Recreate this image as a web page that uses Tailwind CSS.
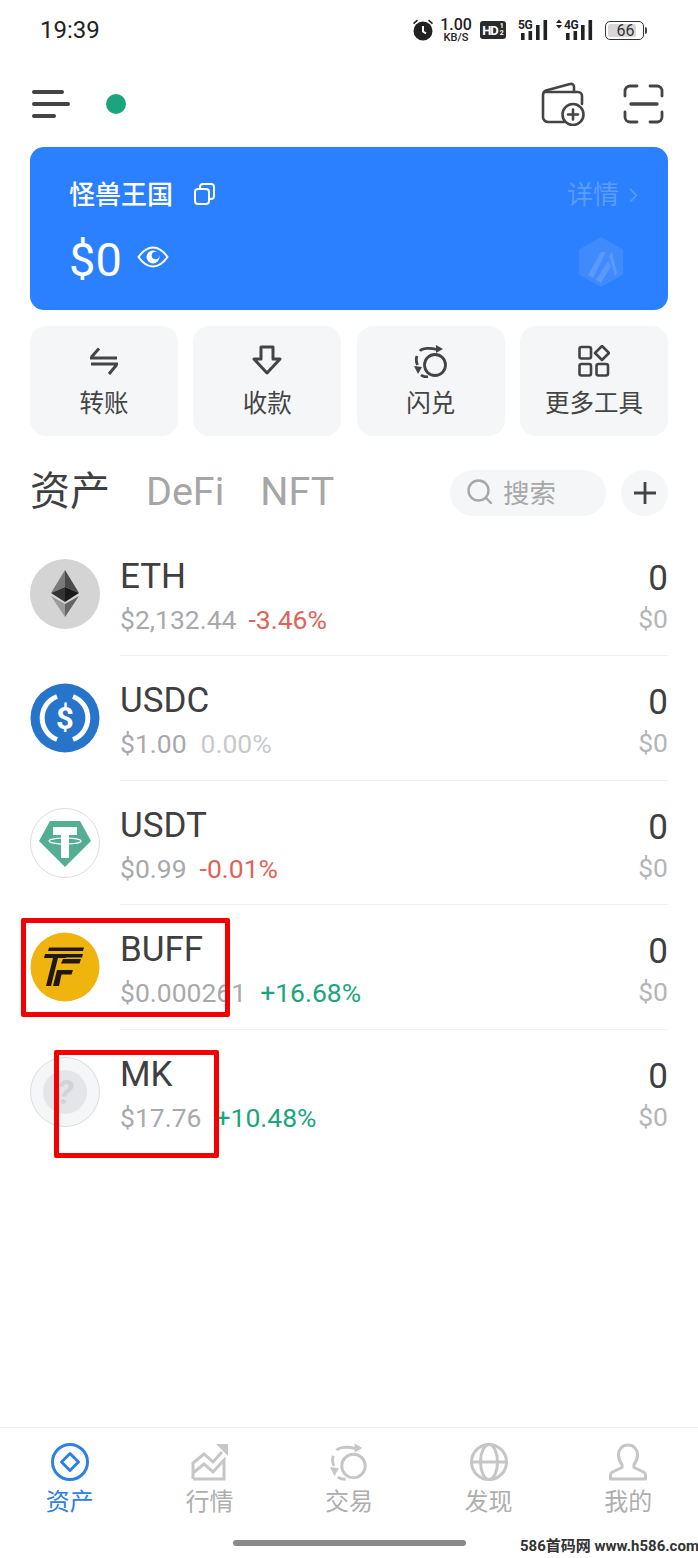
<!DOCTYPE html>
<html lang="zh-CN">
<head>
<meta charset="UTF-8" />
<meta name="viewport" content="width=device-width, initial-scale=1.0" />
<title>资产</title>
<script src="https://cdn.jsdelivr.net/npm/@tailwindcss/browser@4"></script>
</head>
<body class="bg-white">
<div class="relative w-[698px] h-[1558px] overflow-hidden flex flex-col bg-white text-[#3f3f41] font-['Roboto','Noto_Sans_CJK_SC',sans-serif]">

	<!-- status bar -->
	<div class="h-[60px] shrink-0 flex items-center pl-[40px] text-[#222]">
		<span class="text-[24px] leading-none w-[372px]">19:39</span>
		<svg class="w-[22px] h-[23px] mb-[1px]" viewBox="0 0 22 23" fill="#222"><circle cx="11" cy="13" r="9.500"/><path d="M1 5l4-3.500 1 1.200-4 3.500zM21 5l-4-3.500-1 1.200 4 3.500z"/><path d="M11 8v5.500l3 2" fill="none" stroke="#fff" stroke-width="2"/></svg>
		<div class="ml-[7px] w-[30px] flex flex-col items-center gap-[2px] text-[#222] font-medium">
			<span class="text-[16px] leading-[13px]">1.00</span>
			<span class="text-[11px] leading-[9px]">KB/S</span>
		</div>
		<div class="ml-[9px] w-[26px] h-[18px] rounded-[3px] bg-[#2a2a2a] text-white flex items-center justify-center text-[13px] font-bold leading-none tracking-[-1px]">HD<span class="ml-[2px] text-[7px] leading-[7px] w-[4px] tracking-normal">1 2</span></div>
		<svg class="ml-[12px] w-[30px] h-[22px]" viewBox="0 0 30 22" fill="#222"><text x="0" y="9.500" font-size="12" font-weight="700" letter-spacing="-.5" font-family="Roboto">5G</text><rect x="3" y="14" width="3.600" height="7"/><rect x="10.500" y="12" width="3.600" height="9"/><rect x="18" y="6" width="3.600" height="15"/><rect x="25.500" y="1" width="3.600" height="20"/></svg>
		<svg class="ml-[7px] w-[38px] h-[22px]" viewBox="0 0 38 22" fill="#222"><path d="M1 4l3-3.500L7 4zM1 6l3 3.500L7 6z"/><text x="9" y="9.500" font-size="12" font-weight="700" letter-spacing="-.5" font-family="Roboto">4G</text><rect x="11" y="14" width="3.600" height="7"/><rect x="18.500" y="12" width="3.600" height="9"/><rect x="26" y="6" width="3.600" height="15"/><rect x="33.500" y="1" width="3.600" height="20"/></svg>
		<div class="ml-[12px] flex items-center">
			<div class="w-[39px] h-[19px] rounded-[5px] border border-[#333] p-[2px] flex">
				<div class="w-[28px] rounded-[2px] bg-[#d8d8d8] text-[#333] text-[16px] leading-[13px] text-center pl-[7px]">66</div>
			</div>
			<div class="w-[2px] h-[7px] ml-[1px] bg-[#444] rounded-r"></div>
		</div>
	</div>

	<!-- header -->
	<div class="h-[87px] shrink-0 flex items-center pl-[32px] pr-[34px]">
		<div class="w-[38px] flex flex-col gap-[8px]">
			<div class="w-[32px] h-[4px] rounded-full bg-[#444]"></div>
			<div class="w-[38px] h-[4px] rounded-full bg-[#444]"></div>
			<div class="w-[24px] h-[4px] rounded-full bg-[#444]"></div>
		</div>
		<div class="ml-[36px] w-[20px] h-[20px] rounded-full bg-[#1ba57c]"></div>
		<svg class="ml-auto w-[44px] h-[44px]" viewBox="0 0 44 44" fill="none" stroke="#444" stroke-width="2.600" stroke-linecap="round" stroke-linejoin="round">
			<path d="M23 40H7a5 5 0 0 1-5-5V13C2 10.500 3 9.500 5 8.500L29 2c2.500-.6 4 .8 4 3v5"/>
			<path d="M4 10h33a4 4 0 0 1 4 4v8"/>
			<circle cx="32" cy="32.500" r="10.500"/>
			<path d="M32 27.500v10M27 32.500h10"/>
		</svg>
		<svg class="ml-[38px] w-[41px] h-[40px]" viewBox="0 0 41 40" fill="none" stroke="#444" stroke-width="2.800" stroke-linecap="round">
			<path d="M2 12V7a5 5 0 0 1 5-5h7M27 2h7a5 5 0 0 1 5 5v5M2 28v5a5 5 0 0 0 5 5h7M27 38h7a5 5 0 0 0 5-5v-5"/>
			<path d="M8 20h26" stroke-width="3.400"/>
		</svg>
	</div>

	<!-- wallet card -->
	<div class="mx-[30px] h-[163px] shrink-0 rounded-[14px] bg-[#2b80ff] flex justify-between pl-[39px] pr-[30px] pt-[30px] text-white">
		<div>
			<div class="flex items-center h-[36px]">
				<span class="text-[26px] font-medium leading-none">怪兽王国</span>
				<svg class="ml-[21px] mb-[3px] w-[22px] h-[22px]" viewBox="0 0 22 22" fill="none" stroke="#fff" stroke-width="2"><rect x="1" y="6" width="14" height="15" rx="3"/><path d="M6 6V4a3 3 0 0 1 3-3h8a3 3 0 0 1 3 3v9a3 3 0 0 1-3 3h-2"/></svg>
			</div>
			<div class="flex items-center mt-[18px]">
				<span class="text-[47px] leading-[58px]">$0</span>
				<svg class="ml-[15px] mb-[6px] w-[32px] h-[22px]" viewBox="0 0 32 22" fill="none"><path d="M1.500 11C6 4.500 10.500 1.500 16 1.500S26 4.500 30.500 11C26 17.500 21.500 20.500 16 20.500S6 17.500 1.500 11z" stroke="#fff" stroke-width="2"/><circle cx="16" cy="11" r="6.500" fill="#fff"/><circle cx="18.500" cy="9.500" r="3.800" fill="#2b80ff"/></svg>
			</div>
		</div>
		<div class="flex flex-col items-end">
			<div class="flex items-center h-[36px] text-[#5a9cff]">
				<span class="text-[26px] leading-none">详情</span>
				<svg class="ml-[10px] w-[9px] h-[15px]" viewBox="0 0 9 15" fill="none" stroke="#5a9cff" stroke-width="1.600"><path d="M1 1l6.500 6.500L1 14"/></svg>
			</div>
			<svg class="mt-[24px] mr-[15px] w-[44px] h-[50px]" viewBox="0 0 44 50"><path d="M22 0l22 12.500v25L22 50 0 37.500v-25z" fill="#3f8bfd"/><path d="M9 38L22 15h5L14 41zM17 43l12-19 3 5-10 17zM36 39L30 19l3-4 5 21z" fill="#5a99fb"/></svg>
		</div>
	</div>

	<!-- tools -->
	<div class="mx-[30px] mt-[16px] h-[110px] shrink-0 grid grid-cols-4 gap-[15.300px] text-[24.500px] leading-none text-[#444]">
		<div class="rounded-[16px] bg-[#f5f6f8] flex flex-col items-center pt-[20px]">
			<svg class="w-[30px] h-[30px]" viewBox="0 0 30 30" fill="none" stroke="#444" stroke-width="3"><path d="M1 12h27M10 2.500L2.500 11M2 18h27M20 28l7.500-9"/></svg>
			<span class="mt-[16px]">转账</span>
		</div>
		<div class="rounded-[16px] bg-[#f5f6f8] flex flex-col items-center pt-[19px]">
			<svg class="w-[30px] h-[31px]" viewBox="0 0 30 31" fill="none" stroke="#444" stroke-width="3" stroke-linejoin="round"><path d="M9 2h12v12h7L15 28 2 14h7z"/></svg>
			<span class="mt-[16px]">收款</span>
		</div>
		<div class="rounded-[16px] bg-[#f5f6f8] flex flex-col items-center pt-[19px]">
			<svg class="w-[34px] h-[33px]" viewBox="0 0 34 33" fill="none" stroke="#444" stroke-width="2.800"><circle cx="21" cy="20" r="10.500"/><path d="M23 4.500C16 2.500 8 3 6 6M3 11c-1.200 3-.8 6 .5 9M14 32c-2.500 0-5-.5-7-2"/><path d="M22 0v8l7-4zM0 21l8 1-4 7z" fill="#444" stroke="none"/></svg>
			<span class="mt-[14px]">闪兑</span>
		</div>
		<div class="rounded-[16px] bg-[#f5f6f8] flex flex-col items-center pt-[19px]">
			<svg class="w-[32px] h-[32px]" viewBox="0 0 32 32" fill="none" stroke="#444" stroke-width="2.600" stroke-linejoin="round"><rect x="1.500" y="2" width="11.500" height="11.500" rx="2"/><path d="M24 1l7 7-7 7-7-7z"/><rect x="1.500" y="19" width="11.500" height="11.500" rx="2"/><rect x="18.500" y="19" width="11.500" height="11.500" rx="2"/></svg>
			<span class="mt-[15px]">更多工具</span>
		</div>
	</div>

	<!-- tabs -->
	<div class="mt-[34px] mx-[30px] h-[46px] shrink-0 flex items-center">
		<span class="text-[40px] leading-none mb-[3px] text-[#3f3f41]">资产</span>
		<span class="ml-[36px] text-[39.500px] leading-none mb-[3px] text-[#a6a6a6]">DeFi</span>
		<span class="ml-[36px] text-[39.500px] leading-none mb-[3px] text-[#a6a6a6]">NFT</span>
		<div class="ml-auto w-[156px] h-[46px] rounded-full bg-[#f5f6f8] flex items-center pl-[17px] text-[26.500px] text-[#a8a8a8]">
			<svg class="w-[26px] h-[26px] mb-[2px]" viewBox="0 0 26 26" fill="none" stroke="#a8a8a8" stroke-width="2.400" stroke-linecap="round"><circle cx="11.500" cy="11.500" r="10"/><path d="M19 19l5 5"/></svg>
			<span class="ml-[10px] mt-[3px] leading-none">搜索</span>
		</div>
		<div class="ml-[15px] w-[47px] h-[46px] rounded-full bg-[#f5f6f8] flex items-center justify-center">
			<svg class="w-[22px] h-[22px]" viewBox="0 0 22 22" stroke="#444" stroke-width="2.800"><path d="M11 0v22M0 11h22"/></svg>
		</div>
	</div>

	<!-- token list -->
	<div class="mt-[16px] flex-1 px-[30px]">
		<div class="h-[124.400px] flex">
			<svg class="mt-[27px] w-[70px] h-[70px] shrink-0" viewBox="0 0 70 70">
				<circle cx="35" cy="35" r="35" fill="#d4d4d4"/>
				<path d="M35 11L21 34l14-6z" fill="#7a7a7a"/><path d="M35 11l14 23-14-6z" fill="#4a4a4a"/>
				<path d="M21 34l14-6v15z" fill="#333"/><path d="M49 34l-14-6v15z" fill="#1a1a1a"/>
				<path d="M21 37l14 8v13z" fill="#9a9a9a"/><path d="M49 37l-14 8v13z" fill="#666"/>
			</svg>
			<div class="ml-[20px] flex-1 flex justify-between pt-[25px] border-b border-[#f1f1f1]">
				<div>
					<div class="text-[35px] leading-[40px]">ETH</div>
					<div class="mt-[8px] text-[26.500px] leading-[30px] text-[#a8a9ad]">$2,132.44<span class="ml-[12px] text-[#e0635a]">-3.46%</span></div>
				</div>
				<div class="text-right">
					<div class="text-[35px] leading-[44px]">0</div>
					<div class="mt-[3px] text-[26.500px] leading-[30px] text-[#b5b5b8]">$0</div>
				</div>
			</div>
		</div>
		<div class="h-[124.400px] flex">
			<svg class="mt-[27px] w-[70px] h-[70px] shrink-0" viewBox="0 0 70 70">
				<circle cx="35" cy="35" r="34.500" fill="#2775ca"/>
				<path d="M27 13.500a23 23 0 0 0 0 43M43 13.500a23 23 0 0 1 0 43" fill="none" stroke="#fff" stroke-width="5"/>
				<text x="35" y="46" text-anchor="middle" font-size="31" font-weight="700" fill="#fff" font-family="Roboto">$</text>
			</svg>
			<div class="ml-[20px] flex-1 flex justify-between pt-[25px] border-b border-[#f1f1f1]">
				<div>
					<div class="text-[35px] leading-[40px]">USDC</div>
					<div class="mt-[8px] text-[26.500px] leading-[30px] text-[#a8a9ad]">$1.00<span class="ml-[14px] text-[#c8c9cc]">0.00%</span></div>
				</div>
				<div class="text-right">
					<div class="text-[35px] leading-[44px]">0</div>
					<div class="mt-[3px] text-[26.500px] leading-[30px] text-[#b5b5b8]">$0</div>
				</div>
			</div>
		</div>
		<div class="h-[124.400px] flex">
			<svg class="mt-[27px] w-[70px] h-[70px] shrink-0" viewBox="0 0 70 70">
				<circle cx="35" cy="35" r="34.500" fill="#fff" stroke="#ddd"/>
				<path d="M20 13h30l11 20-26 26L9 33z" fill="#53ae94"/>
				<path d="M23 19h24v8H39v23h-8V27h-8z" fill="#fff"/>
				<ellipse cx="35" cy="33" rx="16" ry="3" fill="none" stroke="#fff" stroke-width="1.200"/>
			</svg>
			<div class="ml-[20px] flex-1 flex justify-between pt-[25px] border-b border-[#f1f1f1]">
				<div>
					<div class="text-[35px] leading-[40px]">USDT</div>
					<div class="mt-[8px] text-[26.500px] leading-[30px] text-[#a8a9ad]">$0.99<span class="ml-[13px] text-[#e0635a]">-0.01%</span></div>
				</div>
				<div class="text-right">
					<div class="text-[35px] leading-[44px]">0</div>
					<div class="mt-[3px] text-[26.500px] leading-[30px] text-[#b5b5b8]">$0</div>
				</div>
			</div>
		</div>
		<div class="h-[124.400px] flex">
			<svg class="mt-[27px] w-[70px] h-[70px] shrink-0" viewBox="0 0 70 70">
				<circle cx="35" cy="35" r="34.500" fill="#f0b40f"/>
				<path d="M19 15.500h35l-1 3.500H18zM15 22h22l-1 4h-8l-7 28h-5l7-28H14zM33 27h18l-1.500 4.500H31zM27 38h16l-1.500 4.500H31.500L29 54h-6zM36 22h17l-1 3.500H35z" fill="#1e1a12"/>
			</svg>
			<div class="ml-[20px] flex-1 flex justify-between pt-[25px] border-b border-[#f1f1f1]">
				<div>
					<div class="text-[35px] leading-[40px]">BUFF</div>
					<div class="mt-[8px] text-[26.500px] leading-[30px] text-[#a8a9ad]">$0.000261<span class="ml-[14px] text-[#1ba57c]">+16.68%</span></div>
				</div>
				<div class="text-right">
					<div class="text-[35px] leading-[44px]">0</div>
					<div class="mt-[3px] text-[26.500px] leading-[30px] text-[#b5b5b8]">$0</div>
				</div>
			</div>
		</div>
		<div class="h-[124.400px] flex">
			<svg class="mt-[27px] w-[70px] h-[70px] shrink-0" viewBox="0 0 70 70">
				<circle cx="35" cy="35" r="34.500" fill="#f5f6f8" stroke="#dcdcdc"/>
				<circle cx="35" cy="35" r="22" fill="#e4e5e9"/>
				<text x="35" y="47" text-anchor="middle" font-size="34" font-weight="700" fill="#d2d3d7" font-family="Roboto" font-style="italic">?</text>
			</svg>
			<div class="ml-[20px] flex-1 flex justify-between pt-[25px]">
				<div>
					<div class="text-[35px] leading-[40px]">MK</div>
					<div class="mt-[8px] text-[26.500px] leading-[30px] text-[#a8a9ad]">$17.76<span class="ml-[14px] text-[#1ba57c]">+10.48%</span></div>
				</div>
				<div class="text-right">
					<div class="text-[35px] leading-[44px]">0</div>
					<div class="mt-[3px] text-[26.500px] leading-[30px] text-[#b5b5b8]">$0</div>
				</div>
			</div>
		</div>
	</div>

	<!-- bottom nav -->
	<div class="h-[131px] shrink-0 border-t border-[#efefef] pt-[15px]">
		<div class="grid grid-cols-5 text-[24px] leading-none text-[#aeaeae]">
			<div class="flex flex-col items-center text-[#2f80e4]">
				<svg class="w-[38px] h-[38px]" viewBox="0 0 38 38" fill="none" stroke="#2f80e4" stroke-width="3"><circle cx="19" cy="19" r="17.500"/><path d="M19 10.500l8.500 8.500-8.500 8.500-8.500-8.500z" stroke-linejoin="round"/></svg>
				<span class="mt-[9px]">资产</span>
			</div>
			<div class="flex flex-col items-center">
				<svg class="w-[38px] h-[38px]" viewBox="0 0 38 38" fill="none" stroke="#c6c6c6" stroke-width="3"><path d="M3 36V20l11-9 9 8 9-10M3 36h31V17l-11 12-9-8-11 9"/><path d="M26 1h12v12z" fill="#c6c6c6" stroke="none"/></svg>
				<span class="mt-[9px]">行情</span>
			</div>
			<div class="flex flex-col items-center">
				<svg class="w-[38px] h-[38px]" viewBox="0 0 34 33" fill="none" stroke="#c6c6c6" stroke-width="2.600"><circle cx="21" cy="20" r="10.500"/><path d="M23 4.500C16 2.500 8 3 6 6M3 11c-1.200 3-.8 6 .5 9M14 32c-2.500 0-5-.5-7-2"/><path d="M22 0v8l7-4zM0 21l8 1-4 7z" fill="#c6c6c6" stroke="none"/></svg>
				<span class="mt-[9px]">交易</span>
			</div>
			<div class="flex flex-col items-center">
				<svg class="w-[38px] h-[38px]" viewBox="0 0 38 38" fill="none" stroke="#c6c6c6" stroke-width="3"><circle cx="19" cy="19" r="17.500"/><ellipse cx="19" cy="19" rx="8.500" ry="17.500"/><path d="M2 19h34"/></svg>
				<span class="mt-[9px]">发现</span>
			</div>
			<div class="flex flex-col items-center">
				<svg class="w-[38px] h-[38px]" viewBox="0 0 38 38" fill="none" stroke="#c6c6c6" stroke-width="3" stroke-linejoin="round"><path d="M19 2c-6 0-9.500 4.500-9.500 10 0 4 1.500 7 3.500 9.500v3L3.500 29c-1.500.7-2 2-2 3.500V36h35v-3.500c0-1.500-.5-2.800-2-3.500L25 24.500v-3c2-2.500 3.500-5.500 3.500-9.500C28.500 6.500 25 2 19 2z"/></svg>
				<span class="mt-[9px]">我的</span>
			</div>
		</div>
		<div class="mt-[26px] mx-auto w-[233px] h-[6px] rounded-full bg-[#8a8a8a]"></div>
	</div>

	<!-- red markers drawn on top of the screenshot -->
	<div class="absolute left-[21px] top-[918px] w-[209px] h-[99px] border-[5px] border-[#f40000] rounded-[2px]"></div>
	<div class="absolute left-[54px] top-[1050px] w-[165px] h-[108px] border-[5px] border-[#f40000] rounded-[2px]"></div>
	<div class="absolute left-[520px] top-[1537px] text-[15px] leading-[18px] font-bold text-[#333] whitespace-nowrap">586首码网 www.h586.com</div>
</div>
</body>
</html>
